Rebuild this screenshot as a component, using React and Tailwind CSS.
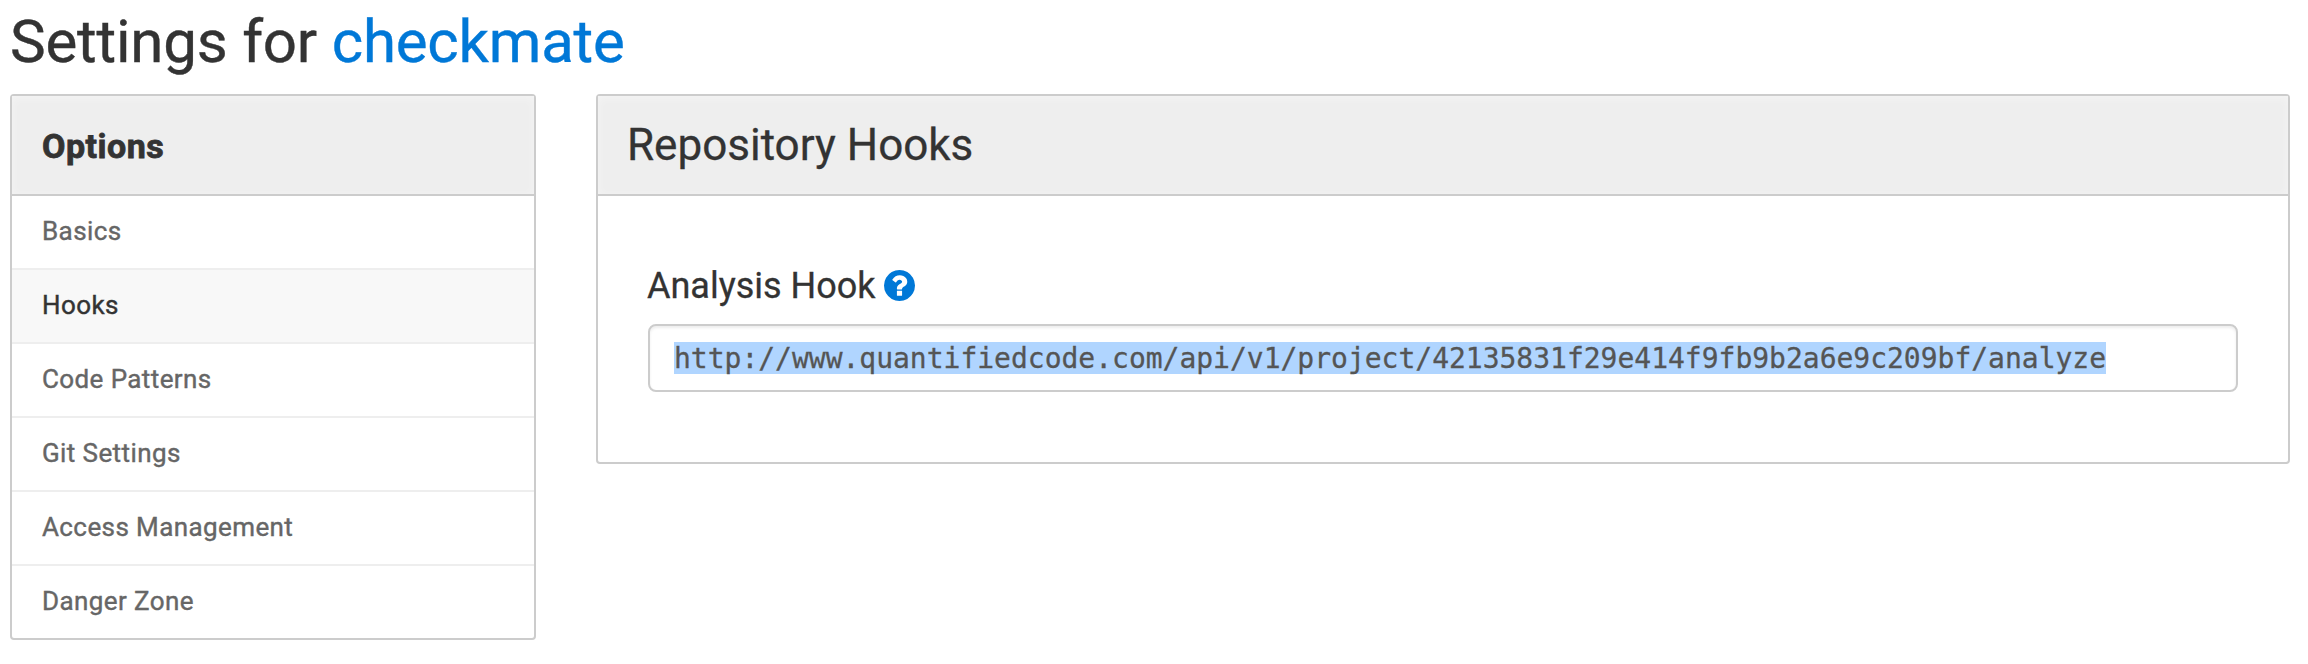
const items = ['Basics', 'Hooks', 'Code Patterns', 'Git Settings', 'Access Management', 'Danger Zone'];

export default function App() {
  return (
    <div className="h-[664px] w-[2308px] overflow-hidden bg-white pl-[10px] font-['Roboto',sans-serif] text-[#333]">
      <h1 className="h-[94px] pt-[5px] text-[60px] leading-[73px] tracking-[-0.2px] [-webkit-text-stroke:0.4px]">
        Settings for <a className="text-[#0078d7]">checkmate</a>
      </h1>
      <div className="flex items-start gap-[60px]">
        <nav className="w-[526px] rounded-[4px] border-2 border-[#ccc]">
          <h2 className="flex h-[100px] items-center border-b-2 border-[#ccc] bg-[#eee] pt-[2px] pl-[30px] text-[34px] font-bold tracking-[0.5px] shadow-[inset_0_2px_10px_rgba(255,255,255,0.4)] [-webkit-text-stroke:0.8px]">Options</h2>
          <ul>
            {items.map((item, i) => (
              <li key={item} className={`flex items-center pb-[2px] pl-[30px] text-[26px] tracking-[0.4px] [-webkit-text-stroke:0.4px] ${i ? 'h-[74px] border-t-2 border-[#eee]' : 'h-[72px]'} ${i === 1 ? 'bg-[#f8f8f8] text-[#333]' : 'text-[#666]'}`}>{item}</li>
            ))}
          </ul>
        </nav>
        <section className="h-[370px] w-[1694px] rounded-[4px] border-2 border-[#ccc]">
          <h2 className="flex h-[100px] items-center border-b-2 border-[#ccc] bg-[#eee] pl-[29px] text-[44px] shadow-[inset_0_2px_10px_rgba(255,255,255,0.4)] [-webkit-text-stroke:0.3px]">Repository Hooks</h2>
          <div className="px-[50px] pt-[64px]">
            <label className="-ml-px flex h-[52px] items-center gap-[8px] text-[36px]">
              <span className="[-webkit-text-stroke:0.3px]">Analysis Hook</span>
              <svg className="mb-[2px] size-[31px]" viewBox="0 0 1536 1536" fill="#0078d7"><path d="M896 1248v-192q0-14-9-23t-23-9H672q-14 0-23 9t-9 23v192q0 14 9 23t23 9h192q14 0 23-9t9-23zm256-672q0-88-55.500-163T958 297t-170-41q-243 0-371 213-15 24 8 42l132 100q7 6 19 6 16 0 25-12 53-68 86-92 34-24 86-24 48 0 85.500 26t37.500 59q0 38-20 61t-68 45q-63 28-115.500 86.500T640 892v36q0 14 9 23t23 9h192q14 0 23-9t9-23q0-19 21.500-49.500T972 829q32-18 49-28.500t46-35 44.500-48 28-60.500 12.500-81zm384 192q0 209-103 385.500T1153.500 1433 768 1536t-385.500-103T103 1153.500 0 768t103-385.500T382.500 103 768 0t385.500 103T1433 382.500 1536 768z"/></svg>
            </label>
            <div className="mt-[12px] flex h-[68px] items-center rounded-[8px] border-2 border-[#ccc] px-[24px] font-['DejaVu_Sans_Mono',monospace] text-[28px] tracking-[-0.01px] text-[#555] shadow-[inset_0_2px_3px_rgba(0,0,0,0.075)]">
              <span className="h-[32px] bg-[#b0d5ff] leading-[33px] [-webkit-text-stroke:0.3px]">http://www.quantifiedcode.com/api/v1/project/42135831f29e414f9fb9b2a6e9c209bf/analyze</span>
            </div>
          </div>
        </section>
      </div>
    </div>
  );
}
